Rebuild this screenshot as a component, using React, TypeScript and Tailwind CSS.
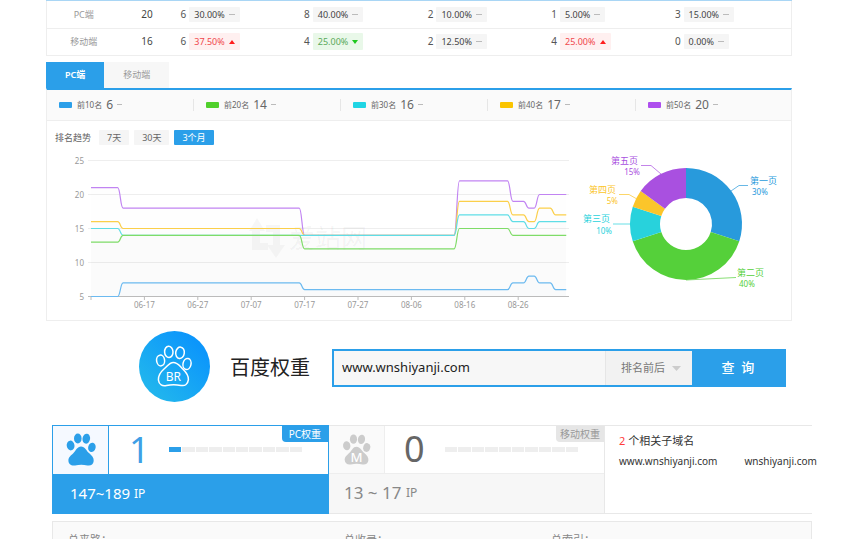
import { useState } from 'react';

type Trend = 'flat' | 'up' | 'down';
type Cell = { count: number; share: string; trend: Trend };

const rows: { name: string; total: number; cells: Cell[] }[] = [
  {
    name: 'PC端',
    total: 20,
    cells: [
      { count: 6, share: '30.00%', trend: 'flat' },
      { count: 8, share: '40.00%', trend: 'flat' },
      { count: 2, share: '10.00%', trend: 'flat' },
      { count: 1, share: '5.00%', trend: 'flat' },
      { count: 3, share: '15.00%', trend: 'flat' },
    ],
  },
  {
    name: '移动端',
    total: 16,
    cells: [
      { count: 6, share: '37.50%', trend: 'up' },
      { count: 4, share: '25.00%', trend: 'down' },
      { count: 2, share: '12.50%', trend: 'flat' },
      { count: 4, share: '25.00%', trend: 'up' },
      { count: 0, share: '0.00%', trend: 'flat' },
    ],
  },
];

const badgeStyle: Record<Trend, string> = {
  flat: 'bg-[#f5f5f5] text-[#444] h-[15px]',
  up: 'bg-[#fff0f0] text-[#f0484c] h-[17px]',
  down: 'bg-[#e9f8e9] text-[#5aa95a] h-[17px]',
};

function TrendMark({ trend }: { trend: Trend }) {
  if (trend === 'flat') return <span className="h-px w-[6px] bg-[#bbb]" />;
  return (
    <svg width="6" height="4" viewBox="0 0 6 4" aria-hidden="true">
      {trend === 'up' ? <path d="M3 0L6 4H0z" fill="#ff1e1e" /> : <path d="M0 0h6L3 4z" fill="#1fc81f" />}
    </svg>
  );
}

function RankTable() {
  return (
    <table className="w-full table-fixed border-collapse border-x border-[#eee]">
      <colgroup>
        <col className="w-[74px]" />
        <col className="w-[53px]" />
        <col span={5} />
      </colgroup>
      <tbody>
        {rows.map((r) => (
          <tr key={r.name} className="h-[27px] border-b border-[#eee]">
            <th className="p-0 text-center text-[9px] font-normal text-[#999]">{r.name}</th>
            <td className="p-0 text-center text-[10px] text-[#444]">{r.total}</td>
            {r.cells.map((c, i) => (
              <td key={i} className="p-0 pl-[7px]">
                <div className="flex items-center gap-[3px]">
                  <span className="text-[10px] text-[#555]">{c.count}</span>
                  <span className={`flex items-center gap-1 rounded-[1px] px-[5px] text-[9px] ${badgeStyle[c.trend]}`}>
                    {c.share}
                    <TrendMark trend={c.trend} />
                  </span>
                </div>
              </td>
            ))}
          </tr>
        ))}
      </tbody>
    </table>
  );
}

const legend = [
  { label: '前10名', value: 6, swatch: 'bg-[#2b9fe9]' },
  { label: '前20名', value: 14, swatch: 'bg-[#50d02c]' },
  { label: '前30名', value: 16, swatch: 'bg-[#20d5e4]' },
  { label: '前40名', value: 17, swatch: 'bg-[#fac400]' },
  { label: '前50名', value: 20, swatch: 'bg-[#ae4eee]' },
];

/* Each series is a list of [last day, value] runs. */
const series: { color: string; fill: string; runs: [number, number][] }[] = [
  { color: '#c184f2', fill: '#999', runs: [[5, 21], [39, 18], [68, 14], [78, 22], [81, 19], [83, 18], [89, 20]] },
  { color: '#fbcf4a', fill: '#999', runs: [[5, 16], [39, 15], [68, 14], [78, 19], [81, 17], [83, 16], [86, 18], [89, 17]] },
  { color: '#5fdde6', fill: '#999', runs: [[5, 15], [68, 14], [78, 17], [81, 16], [83, 15], [89, 16]] },
  { color: '#7fdc68', fill: '#999', runs: [[5, 13], [39, 14], [68, 12], [78, 15], [89, 14]] },
  { color: '#6cbaf0', fill: '#6cbaf0', runs: [[5, 5], [39, 7], [78, 6], [81, 7], [83, 8], [86, 7], [89, 6]] },
];

const dayX = (d: number) => 44 + d * 5.34;
const valueY = (v: number) => 146.5 - (v - 5) * 6.8;

/* Level runs joined by one-day S curves with horizontal handles. */
function smoothPath(runs: [number, number][]) {
  const h = 2.6;
  let d = `M${dayX(0)} ${valueY(runs[0][1])}`;
  runs.forEach(([last, v], i) => {
    const x = dayX(last);
    d += `H${x}`;
    const next = runs[i + 1];
    if (next) {
      const nx = dayX(last + 1);
      d += `C${x + h} ${valueY(v)} ${nx - h} ${valueY(next[1])} ${nx} ${valueY(next[1])}`;
    }
  });
  return d;
}

const dates = ['06-17', '06-27', '07-07', '07-17', '07-27', '08-06', '08-16', '08-26'];

function TrendChart() {
  return (
    <svg viewBox="0 0 524 170" className="block w-full" role="img" aria-label="排名趋势">
      {[10, 15, 20, 25].map((v) => (
        <path key={v} d={`M41 ${valueY(v)}H522`} stroke="#eee" />
      ))}
      {series.map((s) => (
        <path key={s.color} d={`${smoothPath(s.runs)}V146.5H44Z`} fill={s.fill} fillOpacity="0.013" />
      ))}
      <g fill="#000">
        <path fillOpacity="0.03" d="M202 81l8-13 8 13h-5v12h8v7h-16V81zM219 75h14v20h5l-9 13-9-13h6V82h-7z" />
        <text x="242" y="98" fontSize="26" fillOpacity="0.05">爱站网</text>
      </g>
      <path d="M41 146.5H522" stroke="#bbb" />
      {Array.from({ length: 9 }, (_, i) => (
        <path key={i} d={`M${dayX(i * 10)} 147v3`} stroke="#bbb" />
      ))}
      {series.map((s) => (
        <path key={s.color} d={smoothPath(s.runs)} fill="none" stroke={s.color} strokeWidth="1.2" />
      ))}
      <g fontSize="8" fill="#999">
        {[5, 10, 15, 20, 25].map((v) => (
          <text key={v} x="37" y={valueY(v) + 3} textAnchor="end">{v}</text>
        ))}
        {dates.map((t, i) => (
          <text key={t} x={dayX((i + 1) * 10)} y="158" textAnchor="middle">{t}</text>
        ))}
      </g>
    </svg>
  );
}

const slices = [
  { name: '第一页', pct: 30, color: '#289adc', line: 'M160 41L168 35.5H177', x: 179, y: 34, px: 181, py: 45, end: false },
  { name: '第二页', pct: 40, color: '#55d03a', line: 'M115 130L165 127.5', x: 166, y: 126, px: 168, py: 137, end: false },
  { name: '第三页', pct: 10, color: '#28d2dc', line: 'M59 74H42', x: 39, y: 72, px: 41, py: 84, end: true },
  { name: '第四页', pct: 5, color: '#fbc52a', line: 'M65 48.5L58 44.5H48', x: 45, y: 43, px: 47, py: 54, end: true },
  { name: '第五页', pct: 15, color: '#a950e0', line: 'M90 24L80 15.5H70', x: 67, y: 14, px: 69, py: 25, end: true },
];

function polar(r: number, pct: number) {
  const a = (pct / 100) * Math.PI * 2;
  return `${(115 + r * Math.sin(a)).toFixed(2)} ${(74 - r * Math.cos(a)).toFixed(2)}`;
}

function PageDonut() {
  let from = 0;
  return (
    <svg viewBox="0 0 220 170" className="block w-full" role="img" aria-label="各页占比">
      {slices.map((s) => {
        const a = from;
        const b = (from += s.pct);
        const anchor = s.end ? 'end' : 'start';
        return (
          <g key={s.name} fill={s.color}>
            <path d={`M${polar(56, a)}A56 56 0 0 1 ${polar(56, b)}L${polar(26, b)}A26 26 0 0 0 ${polar(26, a)}Z`} />
            <path d={s.line} fill="none" stroke={s.color} strokeOpacity="0.7" />
            <text x={s.x} y={s.y} fontSize="9" textAnchor={anchor}>{s.name}</text>
            <text x={s.px} y={s.py} fontSize="8" textAnchor={anchor}>{s.pct}%</text>
          </g>
        );
      })}
    </svg>
  );
}

function RankPanel() {
  const [tab, setTab] = useState('PC端');
  const [range, setRange] = useState('3个月');
  return (
    <section className="mt-[6px]">
      <div className="flex h-[26px] text-[9px]">
        {['PC端', '移动端'].map((t) => (
          <button
            key={t}
            onClick={() => setTab(t)}
            className={t === tab ? 'bg-[#2b9fe9] px-[19px] font-semibold text-white' : 'bg-[#f7f7f7] px-[19px] text-[#999]'}
          >
            {t}
          </button>
        ))}
      </div>
      <div className="border border-t-2 border-[#eee] border-t-[#2b9fe9]">
        <ul className="grid h-[31px] grid-cols-[147fr_147fr_147fr_148fr_155fr] items-center border-b border-[#eee] bg-[#fafafa]">
          {legend.map((l) => (
            <li key={l.label} className="flex h-3 items-center border-r border-[#e6e6e6] pl-3 last:border-r-0">
              <span className={`h-[6px] w-[13px] rounded-[1px] ${l.swatch}`} />
              <span className="ml-[5px] text-[8px] text-[#666]">{l.label}</span>
              <span className="ml-1 text-[12px] text-[#666]">{l.value}</span>
              <span className="ml-1 h-px w-[5px] bg-[#bbb]" />
            </li>
          ))}
        </ul>
        <div className="flex h-[29px] items-end gap-[5px] pb-[5px] pl-2 text-[9px] leading-[15px] text-[#666]">
          <span className="mr-[3px]">排名趋势</span>
          {['7天', '30天', '3个月'].map((r) => (
            <button
              key={r}
              onClick={() => setRange(r)}
              className={r === range ? 'rounded-[1px] bg-[#2b9fe9] px-2 text-white' : 'rounded-[1px] bg-[#f5f5f5] px-2 text-[#666]'}
            >
              {r}
            </button>
          ))}
        </div>
        <div className="grid grid-cols-[524fr_220fr]">
          <TrendChart />
          <PageDonut />
        </div>
      </div>
    </section>
  );
}

function BrLogo() {
  return (
    <svg width="71" height="71" viewBox="0 0 71 71" className="shrink-0" aria-hidden="true">
      <defs>
        <linearGradient id="br" x1="0.1" y1="0.9" x2="0.9" y2="0.1">
          <stop offset="0.1" stopColor="#20b4ee" />
          <stop offset="0.9" stopColor="#0c96fb" />
        </linearGradient>
      </defs>
      <circle cx="35.5" cy="35.5" r="35.5" fill="url(#br)" />
      <g fill="none" stroke="#fff" strokeWidth="1.5">
        <ellipse cx="21.6" cy="29.5" rx="4" ry="5.4" transform="rotate(-8 21.6 29.5)" />
        <ellipse cx="29.8" cy="20.9" rx="4.2" ry="5.7" transform="rotate(-3 29.8 20.9)" />
        <ellipse cx="41" cy="21.8" rx="4.3" ry="5.7" transform="rotate(8 41 21.8)" />
        <ellipse cx="48" cy="33" rx="4" ry="5.6" transform="rotate(12 48 33)" />
        <path d="M34.3 31.4C38.5 31.4 40.5 34.6 42.8 37C46 40.2 50 43.5 49.4 48.6C48.8 53.8 45.5 55.2 42 54.4C37 53.4 32 53.4 27.5 54.4C23.5 55.2 20 54 19.4 49C19 44 21.5 41 25.5 37.5C28.5 34.8 30.5 31.4 34.3 31.4Z" />
      </g>
      <text x="34.3" y="50" fontSize="12" fill="#fff" textAnchor="middle">BR</text>
    </svg>
  );
}

function SearchBar() {
  return (
    <section className="mt-[10px] flex items-center pl-[93px] pr-[6px]">
      <BrLogo />
      <div className="mt-1 flex flex-1 items-center">
        <h1 className="ml-5 shrink-0 text-[20px] leading-6 text-[#222]">百度权重</h1>
        <form className="ml-[22px] flex h-[38px] flex-1 border-2 border-[#2b9fe9]" onSubmit={(e) => e.preventDefault()}>
          <input
            aria-label="域名"
            defaultValue="www.wnshiyanji.com"
            className="min-w-0 flex-1 bg-[#f7f7f7] px-2 text-[13px] text-[#222] outline-none"
          />
          <div className="relative w-[87px] border-l border-[#e6e6e6] bg-[#f2f2f2]">
            <select aria-label="排序" className="h-full w-full appearance-none bg-transparent pl-[15px] text-[11px] text-[#777] outline-none">
              <option>排名前后</option>
            </select>
            <svg width="9" height="5" viewBox="0 0 9 5" className="pointer-events-none absolute right-[11px] top-[15px]" aria-hidden="true">
              <path d="M0 0h9L4.5 5z" fill="#ccc" />
            </svg>
          </div>
          <button className="w-[92px] bg-[#2b9fe9] text-[13px] font-medium text-white">查&nbsp;&nbsp;询</button>
        </form>
      </div>
    </section>
  );
}

function Paw({ color, letter }: { color: string; letter?: string }) {
  return (
    <svg width={letter ? 29 : 30} height={letter ? 31 : 33} viewBox="0 0 30 33" fill={color} aria-hidden="true">
      <ellipse cx="4.6" cy="12.5" rx="3.9" ry="4.9" transform="rotate(-8 4.6 12.5)" />
      <ellipse cx="11.8" cy="5.5" rx="3.8" ry="5" />
      <ellipse cx="20.3" cy="5.7" rx="3.8" ry="5" transform="rotate(10 20.3 5.7)" />
      <ellipse cx="25.9" cy="14.4" rx="3.7" ry="4.7" transform="rotate(14 25.9 14.4)" />
      <path d="M15 13.5C19 13.5 20.5 18 23 20C26 22.5 28 25 27.7 28C27.4 31.5 24.5 33 21.5 32.4C17 31.6 13.5 31.6 9 32.4C5.5 33 2.5 31.5 2.4 27.5C2.4 24 5 22.5 7.5 20C10 17.5 11.3 13.5 15 13.5Z" />
      {letter && (
        <text x="15" y="30" fontSize="14" fontWeight="500" fill="#fff" textAnchor="middle">{letter}</text>
      )}
    </svg>
  );
}

function Meter({ level }: { level: number }) {
  return (
    <div className="flex w-[133px] gap-px">
      {Array.from({ length: 10 }, (_, i) => (
        <span key={i} className={i < level ? 'h-[5px] flex-1 bg-[#2b9fe9]' : 'h-[5px] flex-1 bg-[#eee]'} />
      ))}
    </div>
  );
}

function Weights() {
  return (
    <section className="mt-[23px] grid h-[89px] grid-cols-[277fr_276fr_minmax(0,207fr)]">
      <article className="grid grid-rows-[49px_40px] border-x border-[#2b9fe9]">
        <div className="relative flex border-t border-[#2b9fe9]">
          <div className="grid w-14 place-items-center border-r border-[#2b9fe9] bg-[#f5f9ff]">
            <Paw color="#2b9fe9" />
          </div>
          <div className="flex items-center">
            <span className="w-[60px] pl-5 text-[36px] leading-none text-[#3f9fe6]">1</span>
            <Meter level={1} />
          </div>
          <span className="absolute right-0 top-0 h-4 rounded-bl-sm bg-[#2b9fe9] px-[7px] text-[10px] leading-4 text-white">PC权重</span>
        </div>
        <p className="flex items-center bg-[#2b9fe9] pl-[17px] text-[15px] text-white">
          147~189&nbsp;<span className="text-[12px]">IP</span>
        </p>
      </article>
      <article className="grid grid-rows-[48px_39px] border-y border-r border-[#e8e8e8]">
        <div className="relative flex border-b border-[#eee]">
          <div className="grid w-14 place-items-center border-r border-[#eee] bg-[#fafafa]">
            <Paw color="#ccc" letter="M" />
          </div>
          <div className="flex items-center">
            <span className="w-[60px] pl-[19px] text-[36px] leading-none text-[#666]">0</span>
            <Meter level={0} />
          </div>
          <span className="absolute right-0 top-0 h-4 rounded-bl-sm bg-[#e6e6e6] px-1 text-[10px] leading-4 text-[#999]">移动权重</span>
        </div>
        <p className="flex items-center bg-[#f7f7f7] pl-[15px] text-[17px] text-[#888]">
          13 ~ 17&nbsp;<span className="text-[12px]">IP</span>
        </p>
      </article>
      <article className="border-y border-[#e8e8e8] pl-[14px] pt-[6px] text-[#333]">
        <p className="text-[11px] leading-[18px]">
          <span className="text-[#ff3b3b]">2</span> 个相关子域名
        </p>
        <p className="flex gap-[27px] whitespace-nowrap text-[10px] leading-[22px]">
          <a href="#www">www.wnshiyanji.com</a>
          <a href="#root">wnshiyanji.com</a>
        </p>
      </article>
    </section>
  );
}

export default function App() {
  return (
    <div className="h-screen overflow-hidden bg-white font-['Noto_Sans','Noto_Sans_CJK_SC',sans-serif]">
      <main className="pl-[46px] pr-[75px]">
        <div className="h-px bg-[#a9d6f5]" />
        <RankTable />
        <RankPanel />
        <SearchBar />
      </main>
      <div className="pl-[52px] pr-[55px]">
        <Weights />
        <section className="mt-[7px] grid h-[60px] grid-cols-[276fr_207fr_260fr] border border-[#e8e8e8] bg-[#fafafa] pl-[15px] pt-[10px] text-[11px] text-[#888]">
          <span>总来路：</span>
          <span>总收录：</span>
          <span>总索引：</span>
        </section>
      </div>
    </div>
  );
}
